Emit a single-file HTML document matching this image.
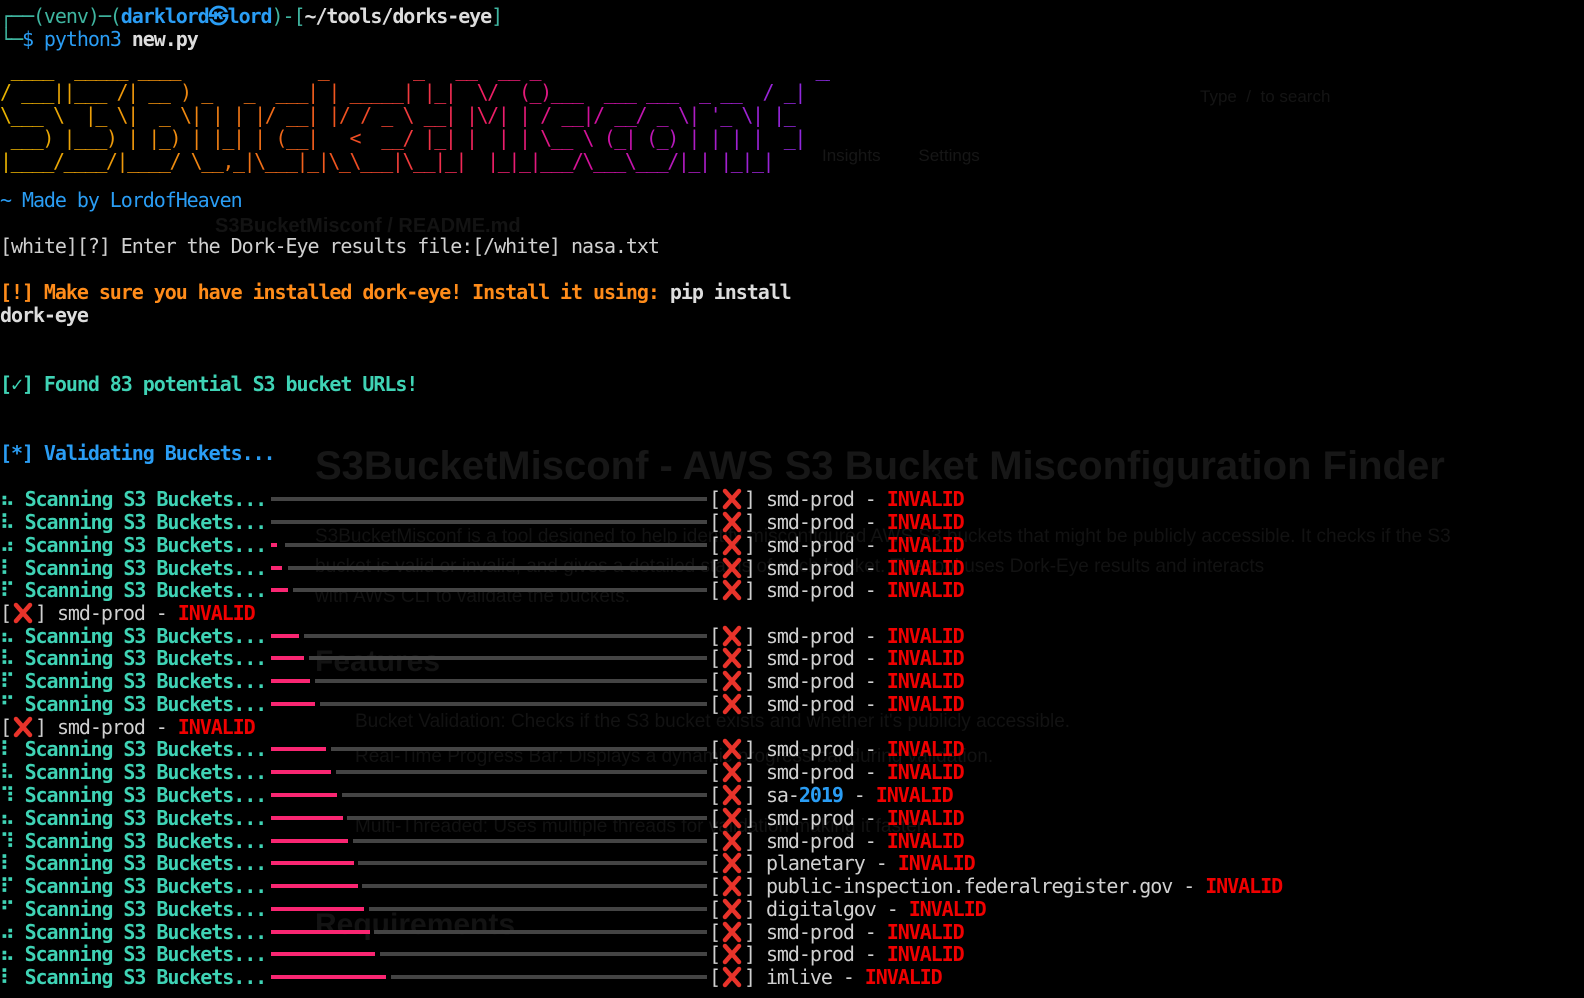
<!DOCTYPE html>
<html><head><meta charset="utf-8"><style>
body{margin:0;width:1584px;height:993px;background:#000;overflow:hidden;position:relative;font-family:"DejaVu Sans Mono","Liberation Mono",monospace;}
.g{position:absolute;left:0;top:0;width:1584px;height:993px}
.l{position:absolute;left:0;height:24px;line-height:24px;font-size:20px;letter-spacing:-1.06px;white-space:pre;color:#d0d0d0;}
.cy{color:#3fd3b5;font-weight:bold}
.rd{color:#f00000;font-weight:bold}
.bl{color:#2a9df4}
.bg{position:absolute;font-family:"Liberation Sans",sans-serif;white-space:pre;}
.bar{position:absolute;height:4px;}
.x{display:inline-block;width:22px;height:22px;vertical-align:-4px;margin:0 1px}
.art{position:absolute;left:0;top:58px;font-size:20px;line-height:23px;letter-spacing:-1.45px;white-space:pre;font-family:"DejaVu Sans Mono",monospace;
background:linear-gradient(90deg,#e8b400 0%,#f08a10 22%,#f05020 42%,#f02060 58%,#d010a0 72%,#a020d0 88%,#8a2be2 100%);-webkit-background-clip:text;background-clip:text;color:transparent;width:830px}
</style></head><body>
<div class="bg" style="left:315px;top:444px;font-size:40px;font-weight:bold;color:#171717">S3BucketMisconf - AWS S3 Bucket Misconfiguration Finder</div>
<div class="bg" style="left:315px;top:526px;font-size:19px;color:#121212">S3BucketMisconf is a tool designed to help identify misconfigured AWS S3 buckets that might be publicly accessible. It checks if the S3</div>
<div class="bg" style="left:315px;top:556px;font-size:19px;color:#121212">bucket is valid or invalid, and gives a detailed status of each bucket. The tool uses Dork-Eye results and interacts</div>
<div class="bg" style="left:315px;top:586px;font-size:19px;color:#121212">with AWS CLI to validate the buckets.</div>
<div class="bg" style="left:315px;top:645px;font-size:30px;font-weight:bold;color:#131313">Features</div>
<div class="bg" style="left:355px;top:711px;font-size:19px;color:#121212">Bucket Validation: Checks if the S3 bucket exists and whether it's publicly accessible.</div>
<div class="bg" style="left:355px;top:746px;font-size:19px;color:#121212">Real-Time Progress Bar: Displays a dynamic progress bar during validation.</div>
<div class="bg" style="left:355px;top:816px;font-size:19px;color:#121212">Multi-Threaded: Uses multiple threads for validation making it faster.</div>
<div class="bg" style="left:315px;top:908px;font-size:30px;font-weight:bold;color:#131313">Requirements</div>
<div class="bg" style="left:822px;top:146px;font-size:17px;color:#161616">Insights        Settings</div>
<div class="bg" style="left:1200px;top:87px;font-size:17px;color:#141414">Type  /  to search</div>
<div class="bg" style="left:215px;top:215px;font-size:20px;font-weight:bold;color:#131313">S3BucketMisconf / README.md</div>

<div class="l" style="top:4px"><span style="color:#3fb5a0">┌──(venv)─(</span><span class="bl" style="font-weight:bold">darklord㉿lord</span><span style="color:#3fb5a0">)-[</span><span style="font-weight:bold;color:#ddd">~/tools/dorks-eye</span><span style="color:#3fb5a0">]</span></div>
<div class="l" style="top:27px"><span style="color:#3fb5a0">└─</span><span class="bl">$ python3</span> <span style="font-weight:bold;color:#ddd">new.py</span></div>

<div class="art"> ____  _____ ____             _        _   __  __ _                          __ 
/ ___||___ /| __ ) _   _  ___| | _____| |_|  \/  (_)___  ___ ___  _ __  / _|
\___ \  |_ \|  _ \| | | |/ __| |/ / _ \ __| |\/| | / __|/ __/ _ \| '_ \| |_ 
 ___) |___) | |_) | |_| | (__|   <  __/ |_| |  | | \__ \ (_| (_) | | | |  _|
|____/____/|____/ \__,_|\___|_|\_\___|\__|_|  |_|_|___/\___\___/|_| |_|_|  </div>

<div class="g" style="top:2px">
<div class="l bl" style="top:186px">~ Made by LordofHeaven</div>
<div class="l" style="top:232px">[white][?] Enter the Dork-Eye results file:[/white] nasa.txt</div>
<div class="l" style="top:278px;font-weight:bold"><span style="color:#ff8c1a">[!] Make sure you have installed dork-eye! Install it using:</span> <span style="color:#ddd">pip install</span></div>
<div class="l" style="top:301px;font-weight:bold;color:#ddd">dork-eye</div>
<div class="l cy" style="top:370px">[✓] Found 83 potential S3 bucket URLs!</div>
<div class="l bl" style="top:439px;font-weight:bold">[*] Validating Buckets...</div>
</div>

<svg width="0" height="0" style="position:absolute"><defs><g id="xx"><path d="M4 3 L18 19 M18 3 L4 19" stroke="#e8332a" stroke-width="4.5" stroke-linecap="round"/></g></defs></svg>

<div class="g" style="top:5px">
<div class="l" style="top:482px"><span class="cy">⠦ Scanning S3 Buckets...</span></div>
<div class="bar" style="left:271px;top:492px;width:436px;background:#444"></div>
<div class="l" style="top:482px;left:709px">[<svg class="x"><use href="#xx"/></svg>] smd-prod - <span class="rd">INVALID</span></div>

<div class="l" style="top:505px"><span class="cy">⠧ Scanning S3 Buckets...</span></div>
<div class="bar" style="left:271px;top:515px;width:436px;background:#444"></div>
<div class="l" style="top:505px;left:709px">[<svg class="x"><use href="#xx"/></svg>] smd-prod - <span class="rd">INVALID</span></div>

<div class="l" style="top:528px"><span class="cy">⠴ Scanning S3 Buckets...</span></div>
<div class="bar" style="left:271px;top:538px;width:6px;background:#f92672"></div><div class="bar" style="left:285px;top:538px;width:422px;background:#444"></div>
<div class="l" style="top:528px;left:709px">[<svg class="x"><use href="#xx"/></svg>] smd-prod - <span class="rd">INVALID</span></div>

<div class="l" style="top:551px"><span class="cy">⠇ Scanning S3 Buckets...</span></div>
<div class="bar" style="left:271px;top:561px;width:11px;background:#f92672"></div><div class="bar" style="left:288px;top:561px;width:419px;background:#444"></div>
<div class="l" style="top:551px;left:709px">[<svg class="x"><use href="#xx"/></svg>] smd-prod - <span class="rd">INVALID</span></div>

<div class="l" style="top:573px"><span class="cy">⠏ Scanning S3 Buckets...</span></div>
<div class="bar" style="left:271px;top:583px;width:17px;background:#f92672"></div><div class="bar" style="left:293px;top:583px;width:414px;background:#444"></div>
<div class="l" style="top:573px;left:709px">[<svg class="x"><use href="#xx"/></svg>] smd-prod - <span class="rd">INVALID</span></div>

<div class="l" style="top:596px">[<svg class="x"><use href="#xx"/></svg>] smd-prod - <span class="rd">INVALID</span></div>

<div class="l" style="top:619px"><span class="cy">⠦ Scanning S3 Buckets...</span></div>
<div class="bar" style="left:271px;top:629px;width:28px;background:#f92672"></div><div class="bar" style="left:304px;top:629px;width:403px;background:#444"></div>
<div class="l" style="top:619px;left:709px">[<svg class="x"><use href="#xx"/></svg>] smd-prod - <span class="rd">INVALID</span></div>

<div class="l" style="top:641px"><span class="cy">⠧ Scanning S3 Buckets...</span></div>
<div class="bar" style="left:271px;top:651px;width:33px;background:#f92672"></div><div class="bar" style="left:309px;top:651px;width:398px;background:#444"></div>
<div class="l" style="top:641px;left:709px">[<svg class="x"><use href="#xx"/></svg>] smd-prod - <span class="rd">INVALID</span></div>

<div class="l" style="top:664px"><span class="cy">⠏ Scanning S3 Buckets...</span></div>
<div class="bar" style="left:271px;top:674px;width:39px;background:#f92672"></div><div class="bar" style="left:315px;top:674px;width:392px;background:#444"></div>
<div class="l" style="top:664px;left:709px">[<svg class="x"><use href="#xx"/></svg>] smd-prod - <span class="rd">INVALID</span></div>

<div class="l" style="top:687px"><span class="cy">⠋ Scanning S3 Buckets...</span></div>
<div class="bar" style="left:271px;top:697px;width:44px;background:#f92672"></div><div class="bar" style="left:320px;top:697px;width:387px;background:#444"></div>
<div class="l" style="top:687px;left:709px">[<svg class="x"><use href="#xx"/></svg>] smd-prod - <span class="rd">INVALID</span></div>

<div class="l" style="top:710px">[<svg class="x"><use href="#xx"/></svg>] smd-prod - <span class="rd">INVALID</span></div>

<div class="l" style="top:732px"><span class="cy">⠇ Scanning S3 Buckets...</span></div>
<div class="bar" style="left:271px;top:742px;width:55px;background:#f92672"></div><div class="bar" style="left:331px;top:742px;width:376px;background:#444"></div>
<div class="l" style="top:732px;left:709px">[<svg class="x"><use href="#xx"/></svg>] smd-prod - <span class="rd">INVALID</span></div>

<div class="l" style="top:755px"><span class="cy">⠧ Scanning S3 Buckets...</span></div>
<div class="bar" style="left:271px;top:765px;width:60px;background:#f92672"></div><div class="bar" style="left:336px;top:765px;width:371px;background:#444"></div>
<div class="l" style="top:755px;left:709px">[<svg class="x"><use href="#xx"/></svg>] smd-prod - <span class="rd">INVALID</span></div>

<div class="l" style="top:778px"><span class="cy">⠹ Scanning S3 Buckets...</span></div>
<div class="bar" style="left:271px;top:788px;width:66px;background:#f92672"></div><div class="bar" style="left:342px;top:788px;width:365px;background:#444"></div>
<div class="l" style="top:778px;left:709px">[<svg class="x"><use href="#xx"/></svg>] sa-<span class="bl" style="font-weight:bold">2019</span> - <span class="rd">INVALID</span></div>

<div class="l" style="top:801px"><span class="cy">⠦ Scanning S3 Buckets...</span></div>
<div class="bar" style="left:271px;top:811px;width:72px;background:#f92672"></div><div class="bar" style="left:347px;top:811px;width:360px;background:#444"></div>
<div class="l" style="top:801px;left:709px">[<svg class="x"><use href="#xx"/></svg>] smd-prod - <span class="rd">INVALID</span></div>

<div class="l" style="top:824px"><span class="cy">⠹ Scanning S3 Buckets...</span></div>
<div class="bar" style="left:271px;top:834px;width:77px;background:#f92672"></div><div class="bar" style="left:353px;top:834px;width:354px;background:#444"></div>
<div class="l" style="top:824px;left:709px">[<svg class="x"><use href="#xx"/></svg>] smd-prod - <span class="rd">INVALID</span></div>

<div class="l" style="top:846px"><span class="cy">⠇ Scanning S3 Buckets...</span></div>
<div class="bar" style="left:271px;top:856px;width:83px;background:#f92672"></div><div class="bar" style="left:358px;top:856px;width:349px;background:#444"></div>
<div class="l" style="top:846px;left:709px">[<svg class="x"><use href="#xx"/></svg>] planetary - <span class="rd">INVALID</span></div>

<div class="l" style="top:869px"><span class="cy">⠏ Scanning S3 Buckets...</span></div>
<div class="bar" style="left:271px;top:879px;width:87px;background:#f92672"></div><div class="bar" style="left:362px;top:879px;width:345px;background:#444"></div>
<div class="l" style="top:869px;left:709px">[<svg class="x"><use href="#xx"/></svg>] public-inspection.federalregister.gov - <span class="rd">INVALID</span></div>

<div class="l" style="top:892px"><span class="cy">⠋ Scanning S3 Buckets...</span></div>
<div class="bar" style="left:271px;top:902px;width:93px;background:#f92672"></div><div class="bar" style="left:369px;top:902px;width:338px;background:#444"></div>
<div class="l" style="top:892px;left:709px">[<svg class="x"><use href="#xx"/></svg>] digitalgov - <span class="rd">INVALID</span></div>

<div class="l" style="top:915px"><span class="cy">⠴ Scanning S3 Buckets...</span></div>
<div class="bar" style="left:271px;top:925px;width:99px;background:#f92672"></div><div class="bar" style="left:374px;top:925px;width:333px;background:#444"></div>
<div class="l" style="top:915px;left:709px">[<svg class="x"><use href="#xx"/></svg>] smd-prod - <span class="rd">INVALID</span></div>

<div class="l" style="top:937px"><span class="cy">⠦ Scanning S3 Buckets...</span></div>
<div class="bar" style="left:271px;top:947px;width:104px;background:#f92672"></div><div class="bar" style="left:380px;top:947px;width:327px;background:#444"></div>
<div class="l" style="top:937px;left:709px">[<svg class="x"><use href="#xx"/></svg>] smd-prod - <span class="rd">INVALID</span></div>

<div class="l" style="top:960px"><span class="cy">⠇ Scanning S3 Buckets...</span></div>
<div class="bar" style="left:271px;top:970px;width:115px;background:#f92672"></div><div class="bar" style="left:391px;top:970px;width:316px;background:#444"></div>
<div class="l" style="top:960px;left:709px">[<svg class="x"><use href="#xx"/></svg>] imlive - <span class="rd">INVALID</span></div>
</div>
</body></html>
